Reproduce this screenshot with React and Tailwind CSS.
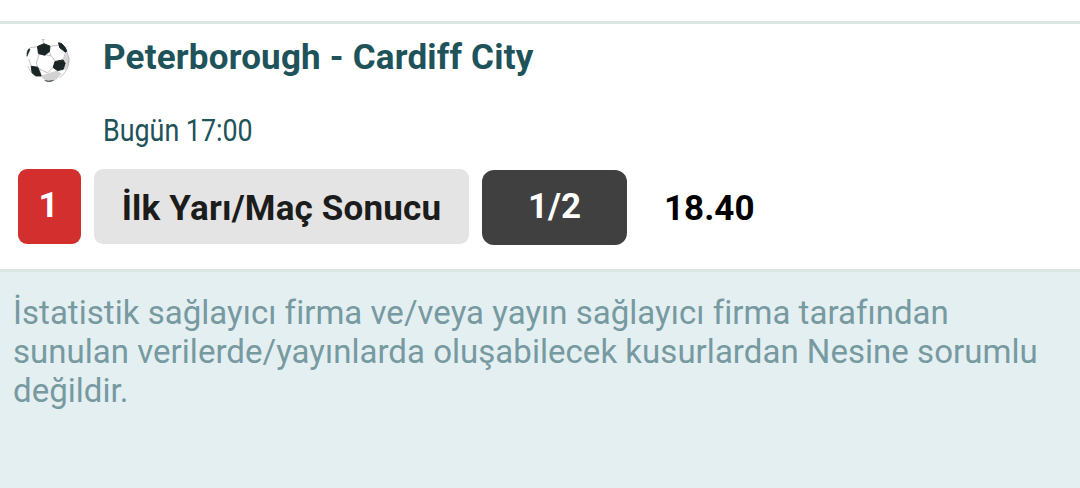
const DISCLAIMER = [
  'İstatistik sağlayıcı firma ve/veya yayın sağlayıcı firma tarafından',
  'sunulan verilerde/yayınlarda oluşabilecek kusurlardan Nesine sorumlu',
  'değildir.',
];

const FootballIcon = () => (
  <svg viewBox="26 39 44 44" className="w-11 h-11 shrink-0">
    <circle cx="48" cy="60" r="21.5" fill="#fefefe" />
    {/* Gölge */}
    <path d="M66.500 52l3 6 .2 4-1.500 5-3.200 3.300-1.500-1 2-6-2-3.500z" fill="#d6d6d6" />
    <path d="M41 75.500l2-.500 8-2.500 6-2 4.500 3.500-5 5.500-8 1.700-6-3z" fill="#d2d2d2" />
    {/* Dikişler */}
    <g fill="none" stroke="#b5b5b5" strokeWidth="0.8">
      <path d="M39.300 54l-3 9 1.400 4M44 54.700l7 1 4.300 5.600M50 46.300l8.700-1M51 55.700l-1.700-4M37.700 67l2 2 8 4 5.300-5.700M39.700 69l1 6.500M63.300 59.700l2-7M38 46.700l-8 1M31.300 66.300l-2.500-7M43.200 39v4M41.800 39.500h2.800" />
      <path d="M28 66.500a21.500 21.500 0 0 0 5.500 8M66.700 50.700a21.500 21.500 0 0 1-7 27" />
    </g>
    {/* Siyah parçalar */}
    <g fill="#1b2427" stroke="#1b2427" strokeWidth="1" strokeLinejoin="round">
      <path d="M37.500 46.500l6.500-2.800 6 2.500-.600 5.400-4.700 3.600-6.200-1.600z" />
      <path d="M55 61.500l8-1.600 2.100 3.400-1.900 6-5.700 1.300-4.300-3.100z" />
      <path d="M31.200 66.300l6.500.900 3.500 8.800-5.500-.100-3.500-3z" />
      <path d="M58.500 42.800l3 .7 3.500 3.800 1.700 3.500-1 1.500-5.900-4.500z" />
      <path d="M30 49l-1.300 3.500-1.200 2.300-.500 1.500v-3l.6-2.500 1.300-2z" strokeWidth="0.6" />
      <path d="M44.500 80.300l4 .6 5.500-.6-3 1.300h-4z" strokeWidth="0.3" />
    </g>
  </svg>
);

export default function App() {
  return (
    <div className="w-[1080px] h-[488px] bg-white font-[Roboto,sans-serif] overflow-hidden flex flex-col [font-variant-ligatures:none]">
      {/* Maç */}
      <div className="mt-[21px] h-[251px] border-y-[3px] border-[#dbe6e4] flex flex-col shrink-0">
        <div className="flex pl-[26px] pt-[15px] h-[145px]">
          <FootballIcon />
          <div className="ml-[33px] text-[#20525a]">
            <h1 className="pt-px text-[35px] leading-[36px] font-bold tracking-[0.2px] whitespace-nowrap">Peterborough - Cardiff City</h1>
            <p className="mt-[37px] text-[30.5px] leading-[36px] whitespace-nowrap origin-left scale-x-[0.88]">Bugün 17:00</p>
          </div>
        </div>

        {/* Bahis */}
        <div className="flex pl-[18px] text-[35px] font-bold leading-[75px] whitespace-nowrap">
          <div className="w-[63px] h-[75px] rounded-[9px] bg-[#d32f2f] text-white text-center pr-0.5 leading-[73px]">1</div>
          <div className="ml-[13px] w-[375px] h-[75px] rounded-[9px] bg-[#e4e4e4] text-[#1c1c1c] text-center tracking-[0.18px] leading-[79px]">İlk Yarı/Maç Sonucu</div>
          <div className="ml-[13px] mt-px w-[145px] h-[75px] rounded-[12px] bg-[#404040] text-white text-center leading-[73px]">1/2</div>
          <div className="ml-[37px] text-black leading-[79px]">18.40</div>
        </div>
      </div>

      {/* Uyarı */}
      <div className="flex-1 bg-[#e4eff2] pl-[13px] pt-[21px] text-[33px] leading-[39px] tracking-[0.03px] text-[#7799a0] whitespace-nowrap">
        {DISCLAIMER.map((line) => (
          <p key={line}>{line}</p>
        ))}
      </div>
    </div>
  );
}
